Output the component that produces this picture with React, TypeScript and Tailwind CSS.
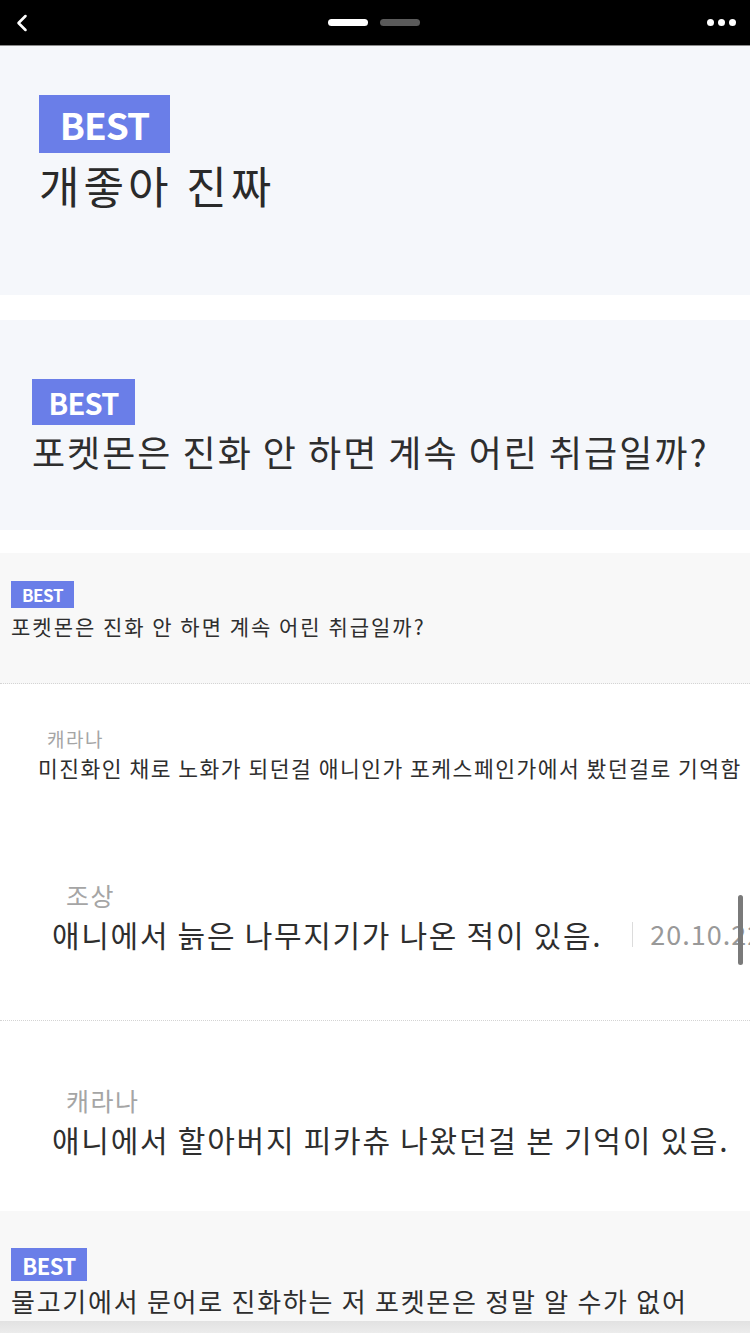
import { ChevronLeft } from 'lucide-react'

const KR = { fontFamily: '"Noto Sans CJK KR", "Noto Sans", sans-serif' }

function Badge({ className }: { className: string }) {
  return (
    <div className={`flex items-center justify-center bg-[#6a7ee8] font-bold text-white leading-none tracking-tight ${className}`}>
      BEST
    </div>
  )
}

function TopBar() {
  return (
    <div className="box-content flex h-[45px] items-center border-b border-[#8a8a8a] bg-black px-3">
      <div className="flex-1">
        <ChevronLeft className="-ml-1 size-7 text-white" strokeWidth={2.2} />
      </div>
      <div className="flex items-center gap-3">
        <div className="h-[7px] w-10 rounded-full bg-white" />
        <div className="h-[7px] w-10 rounded-full bg-[#5a5a5a]" />
      </div>
      <div className="flex flex-1 items-center justify-end gap-[4px] pr-[2px]">
        <div className="size-[7px] rounded-full bg-white" />
        <div className="size-[7px] rounded-full bg-white" />
        <div className="size-[7px] rounded-full bg-white" />
      </div>
    </div>
  )
}

export default function App() {
  return (
    <div className="relative h-[1333px] w-[750px] overflow-hidden bg-white" style={KR}>
      <TopBar />

      {/* first capture */}
      <section className="h-[249px] bg-[#f5f7fb] pl-[39px] pt-[49px]">
        <Badge className="h-[58px] w-[131px] text-[37px]" />
        <h1 className="mt-[4px] text-[44px] leading-[56px] tracking-[4px] text-[#2a2a2a]">개좋아 진짜</h1>
      </section>

      <div className="h-[25px]" />

      <section className="h-[210px] bg-[#f5f7fb] pl-[32px] pt-[59px]">
        <Badge className="h-[46px] w-[103px] text-[29px]" />
        <h2 className="mt-[2px] whitespace-nowrap text-[36px] leading-[48px] tracking-[2px] text-[#2e2e2e]">포켓몬은 진화 안 하면 계속 어린 취급일까?</h2>
      </section>

      <div className="h-[23px]" />

      <section className="h-[131px] border-b border-dotted border-[#d4d4d4] bg-[#f8f8f8] pl-[11px] pt-[28px]">
        <Badge className="h-[27px] w-[63px] text-[17px]" />
        <h3 className="mt-[2px] whitespace-nowrap text-[21px] leading-[32px] tracking-[2px] text-[#2e2e2e]">포켓몬은 진화 안 하면 계속 어린 취급일까?</h3>
      </section>

      {/* comments */}
      <div className="h-[125px] pl-[38px] pt-[42px]">
        <div className="pl-[9px] text-[19px] leading-[26px] tracking-[1.5px] text-[#a5a5a5]">캐라나</div>
        <div className="whitespace-nowrap text-[21.5px] leading-[32px] tracking-[1.5px] text-[#2e2e2e]">미진화인 채로 노화가 되던걸 애니인가 포케스페인가에서 봤던걸로 기억함</div>
      </div>

      <div className="h-[212px] border-b border-dotted border-[#d4d4d4] pl-[52px] pt-[69px]">
        <div className="pl-[14px] text-[25px] leading-[34px] tracking-[1.5px] text-[#a5a5a5]">조상</div>
        <div className="flex items-center whitespace-nowrap text-[30px] leading-[44px] text-[#2e2e2e]">
          <span className="shrink-0 tracking-[1.7px]">애니에서 늙은 나무지기가 나온 적이 있음.</span>
          <span className="ml-[30px] mr-[17px] h-[25px] w-px shrink-0 bg-[#dcdcdc]" />
          <span className="shrink-0 text-[27px] tracking-[1px] text-[#999]">20.10.22</span>
        </div>
      </div>

      <div className="h-[190px] pl-[52px] pt-[62px]">
        <div className="pl-[14px] text-[25px] leading-[34px] tracking-[1.5px] text-[#a5a5a5]">캐라나</div>
        <div className="whitespace-nowrap text-[30px] leading-[44px] tracking-[1.75px] text-[#2e2e2e]">애니에서 할아버지 피카츄 나왔던걸 본 기억이 있음.</div>
      </div>

      <section className="h-[110px] bg-[#f8f8f8] pl-[11px] pt-[37px]">
        <Badge className="h-[33px] w-[76px] text-[22px]" />
        <h3 className="whitespace-nowrap text-[26px] leading-[40px] tracking-[1.75px] text-[#2e2e2e]">물고기에서 문어로 진화하는 저 포켓몬은 정말 알 수가 없어</h3>
      </section>
      <div className="h-[20px] bg-gradient-to-b from-[#e2e2e2] to-[#f2f2f2]" />

      {/* scrollbar */}
      <div className="absolute right-[7px] top-[895px] h-[70px] w-[5px] rounded-full bg-[#7a7a7a]" />
    </div>
  )
}
